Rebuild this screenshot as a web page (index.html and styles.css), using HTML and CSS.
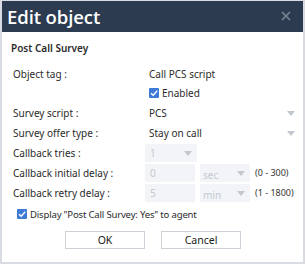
FILE: index.html
```html
<!DOCTYPE html>
<html>
<head>
<meta charset="utf-8">
<link rel="stylesheet" href="styles.css">
</head>
<body>
<div class="dialog">
  <div class="titlebar">
    <span class="title">Edit object</span>
    <svg class="close" width="10" height="10" viewBox="0 0 10 10"><path d="M1 1L9 9M9 1L1 9" stroke="#7a8594" stroke-width="1.6"/></svg>
  </div>
  <div class="content">
    <div class="section">Post Call Survey</div>
    <div class="form">
      <div class="label">Object tag :</div>
      <div class="value text">Call PCS script</div>

      <div class="label"></div>
      <div class="value text"><span class="check"><svg width="10" height="10" viewBox="0 0 10 10"><path d="M2 5.2L4.2 7.3L8.2 2.8" fill="none" stroke="#fff" stroke-width="1.4"/></svg></span>Enabled</div>

      <div class="label">Survey script :</div>
      <div class="value text wide">PCS<span class="arrow"></span></div>

      <div class="label">Survey offer type :</div>
      <div class="value text wide">Stay on call<span class="arrow"></span></div>

      <div class="label">Callback tries :</div>
      <div class="value"><span class="box tries">1<span class="arrow"></span></span></div>

      <div class="label">Callback initial delay :</div>
      <div class="value"><span class="box num">0</span><span class="box unit">sec<span class="arrow"></span></span><span class="range">(0 - 300)</span></div>

      <div class="label">Callback retry delay :</div>
      <div class="value"><span class="box num">5</span><span class="box unit">min<span class="arrow"></span></span><span class="range">(1 - 1800)</span></div>
    </div>
    <div class="display"><span class="check"><svg width="10" height="10" viewBox="0 0 10 10"><path d="M2 5.2L4.2 7.3L8.2 2.8" fill="none" stroke="#fff" stroke-width="1.4"/></svg></span><span class="display-text">Display "Post Call Survey: Yes" to agent</span></div>
    <div class="buttons">
      <button class="btn">OK</button>
      <button class="btn">Cancel</button>
    </div>
  </div>
</div>
</body>
</html>
```
FILE: styles.css
```css
html, body { margin: 0; padding: 0; background: #fff; }
body { font-family: "Noto Sans", "Open Sans", sans-serif; color: #2b2b2b; font-size: 10px; }
.dialog {
  width: 305px; height: 264px; box-sizing: border-box;
  border: 2px solid #d9dde3; border-top-width: 1px;
  display: flex; flex-direction: column;
}
.titlebar {
  height: 31px; background: #2c3b4f; display: flex; align-items: center;
  justify-content: space-between; padding: 0 12px 0 5px; flex: none;
}
.title { color: #fff; font-size: 18.5px; line-height: 31px; font-family: "Open Sans", "Noto Sans", sans-serif; font-weight: 600; letter-spacing: -0.1px; }
.close { margin-top: -1px; }
.content { padding: 8px 0 0 9px; }
.section { font-weight: 600; font-size: 10px; line-height: 16px; height: 16px; margin-bottom: 9px; }
.form { display: grid; grid-template-columns: 132px 1fr; grid-template-rows: 19px; grid-auto-rows: 20px; padding-left: 2px; }
.label { line-height: 18px; }
.value { display: flex; align-items: center; height: 18px; line-height: 18px; }
.text { padding-left: 4px; }
.wide { width: 152px; box-sizing: border-box; padding-right: 2px; }
.arrow {
  display: inline-block; width: 0; height: 0;
  border-left: 4px solid transparent; border-right: 4px solid transparent;
  border-top: 5px solid #c3c8cf; margin-left: auto;
}
.box {
  background: #f2f4f7; color: #c3c9d1; height: 18px; box-sizing: border-box;
  padding: 0 5px 0 5px; display: inline-flex; align-items: center;
}
.tries { width: 52px; }
.num { width: 50px; }
.unit { width: 50px; margin-left: 5px; padding-top: 3px; padding-left: 3px; }
.unit .arrow { margin-top: -3px; }
.range { color: #333; font-size: 9px; margin-left: 5px; }
.check {
  display: inline-flex; width: 10px; height: 10px; background: #3d7bd6; border-radius: 1px;
  margin-right: 3px; align-items: center; justify-content: center; flex: none;
}
.display { display: flex; align-items: center; height: 18px; margin-top: 1px; padding-left: 6px; }
.display-text { font-size: 9.6px; letter-spacing: -0.2px; }
.buttons { display: flex; gap: 16px; padding-left: 54px; margin-top: 8px; }
.btn {
  width: 80px; height: 18px; border: 1px solid #cdd2d9; background: #fff; font-family: inherit;
  font-size: 10.5px; color: #222; padding: 0; line-height: 16px;
}
```
